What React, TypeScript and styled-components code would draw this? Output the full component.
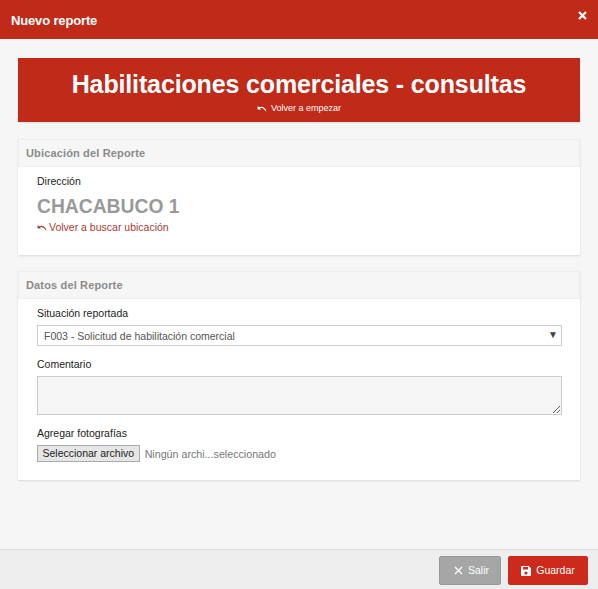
import { FunctionComponent } from 'react'
import styled, { createGlobalStyle } from 'styled-components'

const UndoIcon: FunctionComponent = () => (
  <svg width='10' height='7' viewBox='0 0 11 8' fill='currentColor'>
    <path d='M0.5 1 L0.5 5 L4.5 5 L3 3.7 C4.8 2.8 7.6 3.2 9.6 7 L10.5 7 C9.4 2.8 5.6 0.8 2.2 2.6 Z' />
  </svg>
)

const SaveIcon: FunctionComponent = () => (
  <svg width='10' height='10' viewBox='0 0 10 10' fill='currentColor'>
    <path d='M0 1 Q0 0 1 0 L7.8 0 L10 2.2 L10 9 Q10 10 9 10 L1 10 Q0 10 0 9 Z M2 1 L2 3.4 L7 3.4 L7 1 Z M5 5.4 A1.6 1.6 0 1 0 5 8.6 A1.6 1.6 0 1 0 5 5.4 Z' fillRule='evenodd' />
  </svg>
)

const CloseIcon: FunctionComponent<{ weight: number }> = ({ weight }) => (
  <svg width='9' height='9' viewBox='0 0 9 9' stroke='currentColor' strokeWidth={weight}>
    <path d='M1 1 L8 8 M8 1 L1 8' />
  </svg>
)

const App: FunctionComponent = () => {
  return (
    <Modal>
      <GlobalStyle />
      <Header>
        <HeaderTitle>Nuevo reporte</HeaderTitle>
        <CloseButton>
          <CloseIcon weight={2.2} />
        </CloseButton>
      </Header>
      <Body>
        <Banner>
          <BannerTitle>Habilitaciones comerciales - consultas</BannerTitle>
          <BannerLink>
            <UndoIcon />
            Volver a empezar
          </BannerLink>
        </Banner>
        <Panel>
          <PanelHeading>Ubicación del Reporte</PanelHeading>
          <LocationBody>
            <Label>Dirección</Label>
            <Address>CHACABUCO 1</Address>
            <BackLink>
              <UndoIcon />
              Volver a buscar ubicación
            </BackLink>
          </LocationBody>
        </Panel>
        <Panel>
          <PanelHeading>Datos del Reporte</PanelHeading>
          <FormBody>
            <Field>
              <Label>Situación reportada</Label>
              <SelectBox>
                F003 - Solicitud de habilitación comercial
                <Caret>▼</Caret>
              </SelectBox>
            </Field>
            <Field>
              <Label>Comentario</Label>
              <CommentArea />
            </Field>
            <Field>
              <Label>Agregar fotografías</Label>
              <FileRow>
                <FileButton>Seleccionar archivo</FileButton>
                <FileName>Ningún archi...seleccionado</FileName>
              </FileRow>
            </Field>
          </FormBody>
        </Panel>
      </Body>
      <Footer>
        <ExitButton>
          <CloseIcon weight={1.2} />
          <ButtonText>Salir</ButtonText>
        </ExitButton>
        <SaveButton>
          <SaveIcon />
          <ButtonText>Guardar</ButtonText>
        </SaveButton>
      </Footer>
    </Modal>
  )
}
export default App

const GlobalStyle = createGlobalStyle`
  html, body {
    margin: 0;
    padding: 0;
    background: #f5f5f5;
  }
  * {
    box-sizing: border-box;
  }
`

const Modal = styled.div`
  width: 598px;
  height: 589px;
  display: flex;
  flex-direction: column;
  font-family: 'Liberation Sans', Arial, sans-serif;
  font-size: 12px;
  color: #333;
  background-color: #f6f6f6;
  overflow: hidden;
`

const Header = styled.div`
  height: 39px;
  flex: none;
  display: flex;
  justify-content: space-between;
  padding: 13px 11px 0 11px;
  background-color: #bf2a19;
  color: white;
`

const HeaderTitle = styled.div`
  font-size: 13px;
  font-weight: bold;
  line-height: 16px;
  letter-spacing: -0.15px;
`

const CloseButton = styled.div`
  margin-top: -2px;
  line-height: 9px;
`

const Body = styled.div`
  flex: 1;
  display: flex;
  flex-direction: column;
  gap: 16px;
  padding: 19px 18px 0;
`

const Banner = styled.div`
  height: 64px;
  margin-bottom: 1px;
  background-color: #bf2a19;
  color: white;
  text-align: center;
  padding-top: 12px;
  box-shadow: 0 1px 2px rgba(0, 0, 0, 0.1);
`

const BannerTitle = styled.div`
  font-size: 25px;
  font-weight: bold;
  line-height: 28px;
  letter-spacing: -0.14px;
`

const BannerLink = styled.div`
  display: flex;
  justify-content: center;
  align-items: center;
  gap: 4px;
  margin-top: 4px;
  font-size: 9px;
  line-height: 12px;
`

const Panel = styled.div`
  background-color: white;
  box-shadow: 0 1px 2px rgba(0, 0, 0, 0.12);
`

const PanelHeading = styled.div`
  height: 28px;
  padding: 6px 7px 0;
  background-color: #f6f6f6;
  border: 1px solid #eeeeee;
  font-size: 11px;
  font-weight: bold;
  line-height: 15px;
  letter-spacing: 0.15px;
  color: #8a8a8a;
`

const LocationBody = styled.div`
  height: 88px;
  padding: 7px 19px 0;
`

const Label = styled.div`
  font-size: 10.5px;
  line-height: 14px;
  color: #222;
`

const Address = styled.div`
  margin-top: 7px;
  font-size: 19.3px;
  font-weight: bold;
  line-height: 24px;
  color: #999;
`

const BackLink = styled.div`
  display: flex;
  align-items: center;
  gap: 2px;
  margin-top: 1px;
  font-size: 10.5px;
  line-height: 14px;
  color: #a83a32;
`

const FormBody = styled.div`
  display: flex;
  flex-direction: column;
  gap: 11px;
  padding: 7px 18px 18px 19px;
`

const Field = styled.div`
  display: flex;
  flex-direction: column;
  gap: 5px;
`

const SelectBox = styled.div`
  height: 21px;
  display: flex;
  justify-content: space-between;
  align-items: center;
  padding: 0 3px 0 6px;
  border: 1px solid #cccccc;
  font-size: 10.5px;
  color: #555;
`

const Caret = styled.span`
  margin-bottom: 3px;
  font-size: 10px;
  color: #444;
`

const CommentArea = styled.textarea`
  display: block;
  width: 100%;
  height: 39px;
  margin: 0;
  background-color: #f6f6f6;
  border: 1px solid #cccccc;
  resize: vertical;
`

const FileRow = styled.div`
  display: flex;
  align-items: center;
  gap: 5px;
`

const FileButton = styled.div`
  height: 17px;
  padding: 0 4.5px;
  background-color: #e6e6e6;
  border: 1px solid #aaaaaa;
  font-size: 10.5px;
  line-height: 15px;
  color: #222;
`

const FileName = styled.div`
  font-size: 10.7px;
  color: #777;
`

const Footer = styled.div`
  height: 40px;
  flex: none;
  display: flex;
  justify-content: flex-end;
  gap: 7px;
  padding: 6px 10px 0 0;
  background-color: #eeeeee;
  border-top: 1px solid #dddddd;
`

const FooterButton = styled.div`
  height: 29px;
  display: flex;
  align-items: center;
  justify-content: center;
  gap: 5px;
  border-radius: 2px;
  color: white;
  font-size: 10.5px;
`

const ButtonText = styled.span`
  margin-bottom: 2px;
`

const ExitButton = styled(FooterButton)`
  width: 62px;
  padding-left: 3px;
  background-color: #a6a6a6;
  border: 1px solid #999;
`

const SaveButton = styled(FooterButton)`
  width: 80px;
  background-color: #cc2a1a;
`
